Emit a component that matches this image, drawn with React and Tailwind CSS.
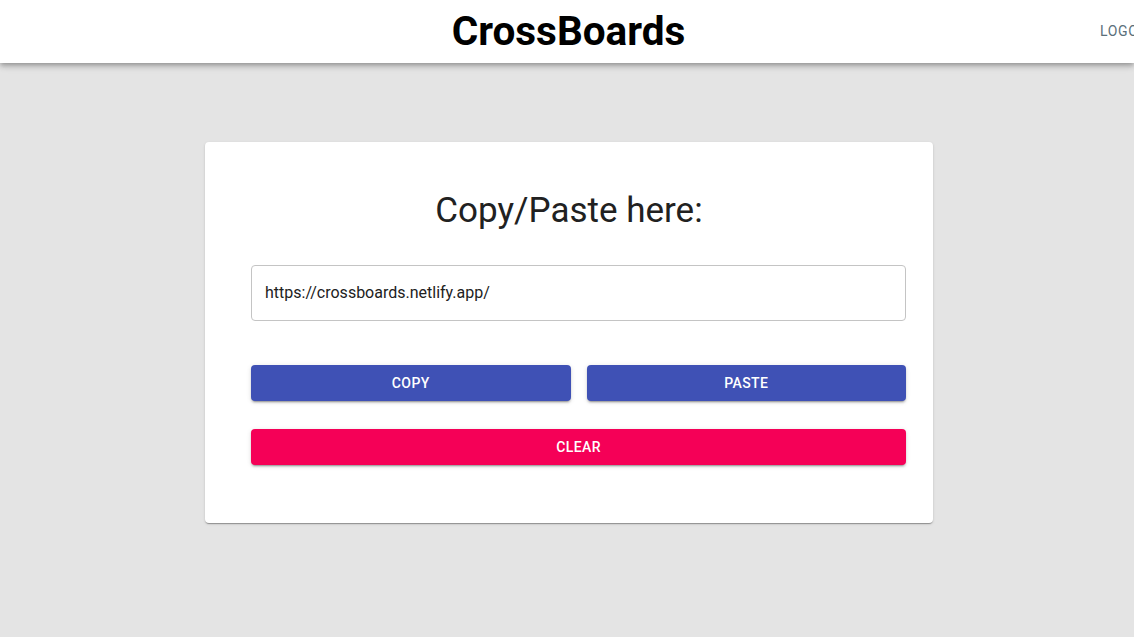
export default function App() {
  return (
    <div className="min-h-[637px] w-full overflow-hidden bg-[#e4e4e4]" style={{ fontFamily: 'Roboto, "Liberation Sans", sans-serif' }}>
      <header className="relative z-10 flex h-[63px] items-center bg-white shadow-[0_2px_4px_-1px_rgba(0,0,0,0.2),0_4px_5px_0_rgba(0,0,0,0.14),0_1px_10px_0_rgba(0,0,0,0.12)]">
        <div className="flex-1" />
        <h1 className="ml-[3px] text-[40.5px] font-bold leading-none text-black">CrossBoards</h1>
        <div className="flex flex-1 justify-end">
          <button className="mr-[-31px] px-2 py-1.5 text-[14px] font-normal uppercase tracking-[0.6px] text-[#5a6f7a]">Logout</button>
        </div>
      </header>
      <main className="flex justify-center pl-[4px] pt-[79px]">
        <div className="w-[728px] rounded bg-white pb-[58px] pl-[46px] pr-[27px] pt-[48px] shadow-[0_2px_1px_-1px_rgba(0,0,0,0.2),0_1px_1px_0_rgba(0,0,0,0.14),0_1px_3px_0_rgba(0,0,0,0.12)]">
          <h2 className="ml-[-19px] text-center text-[35px] leading-[42px] text-[#212121]">Copy/Paste here:</h2>
          <div className="mt-[33px] flex h-[56px] items-center rounded border border-[#c4c4c4] px-[13px] text-base text-[#212121]">
            https://crossboards.netlify.app/
          </div>
          <div className="mt-[44px] flex gap-[16px]">
            <button className="h-[36px] flex-1 rounded bg-[#3f51b5] text-sm font-medium uppercase tracking-[0.4px] text-white shadow-[0_3px_1px_-2px_rgba(0,0,0,0.2),0_2px_2px_0_rgba(0,0,0,0.14),0_1px_5px_0_rgba(0,0,0,0.12)]">Copy</button>
            <button className="h-[36px] flex-1 rounded bg-[#3f51b5] text-sm font-medium uppercase tracking-[0.4px] text-white shadow-[0_3px_1px_-2px_rgba(0,0,0,0.2),0_2px_2px_0_rgba(0,0,0,0.14),0_1px_5px_0_rgba(0,0,0,0.12)]">Paste</button>
          </div>
          <button className="mt-[28px] h-[36px] w-full rounded bg-[#f50057] text-sm font-medium uppercase tracking-[0.4px] text-white shadow-[0_3px_1px_-2px_rgba(0,0,0,0.2),0_2px_2px_0_rgba(0,0,0,0.14),0_1px_5px_0_rgba(0,0,0,0.12)]">Clear</button>
        </div>
      </main>
    </div>
  );
}
